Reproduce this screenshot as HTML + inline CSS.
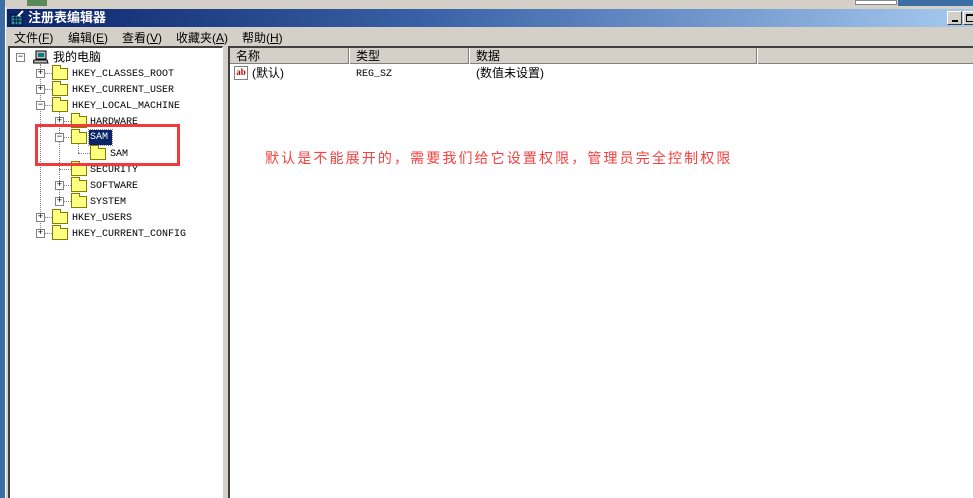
<!DOCTYPE html>
<html><head><meta charset="utf-8"><style>
*{margin:0;padding:0;box-sizing:border-box}
body{width:973px;height:498px;overflow:hidden;background:#d4d0c8;position:relative;font-family:"Liberation Sans","Noto Sans CJK SC",sans-serif;font-size:12px}
.a{position:absolute}
.t{position:absolute;font-family:"Liberation Mono","Noto Sans CJK SC",monospace;font-size:10px;line-height:12px;color:#000;white-space:nowrap}
.cn{font-family:"Liberation Sans","Noto Sans CJK SC",sans-serif;font-size:12px}
.box{position:absolute;width:9px;height:9px;border:1px solid #808080;background:#fff;font-size:9px;line-height:7px;text-align:center;color:#000;font-family:"Liberation Mono",monospace}
.f{position:absolute;width:16px;height:12px;background:#ffff80;border:1px solid #808000}
.f:before{content:"";position:absolute;left:-1px;top:-4px;width:7px;height:3px;background:#ffff80;border:1px solid #808000;border-bottom:none}
.vl{position:absolute;border-left:1px dotted #808080;width:0}
.hl{position:absolute;border-top:1px dotted #808080;height:0}
.m{position:absolute;top:29px;font-size:12px}
</style></head><body>
<div class="a" style="left:0;top:0;width:5px;height:498px;background:#3a6ea5"></div>
<div class="a" style="left:5px;top:0;width:968px;height:9px;background:#d4d0c8;border-bottom:1px solid #fff"></div>
<div class="a" style="left:27px;top:0;width:20px;height:6px;background:#5a8a5a"></div>
<div class="a" style="left:855px;top:0;width:42px;height:5px;background:#fff;border:1px solid #888"></div>
<div class="a" style="left:898px;top:0;width:75px;height:6px;background:#3a6ea5"></div>
<div class="a" style="left:5px;top:7px;width:968px;height:491px;background:#d4d0c8;border-left:1px solid #fff"></div>
<div class="a" style="left:7px;top:9px;width:966px;height:18px;background:linear-gradient(90deg,#0a246a 0%,#3c64a8 45%,#a6caf0 100%)"></div>
<svg class="a" style="left:9px;top:10px" width="16" height="16"><rect x="2" y="5" width="11" height="10" fill="#2aa0a0" stroke="#003" stroke-width="1"/><path d="M3 8h9M3 11h9M6 5v10M9 5v10" stroke="#003"/><path d="M9 6l5-5" stroke="#fff" stroke-width="2"/></svg>
<div class="a" style="left:28px;top:9px;color:#fff;font-weight:bold;font-size:13px;line-height:18px">注册表编辑器</div>
<div class="a" style="left:947px;top:11px;width:15px;height:14px;background:#d4d0c8;border:1px solid;border-color:#fff #404040 #404040 #fff"><div class="a" style="left:4px;top:8px;width:6px;height:2px;background:#000"></div></div>
<div class="a" style="left:963px;top:11px;width:12px;height:14px;background:#d4d0c8;border:1px solid;border-color:#fff #404040 #404040 #fff"><div class="a" style="left:2px;top:2px;width:9px;height:8px;border:1px solid #000;border-top-width:2px"></div></div>
<div class="m" style="left:14px">文件(<u>F</u>)</div>
<div class="m" style="left:68px">编辑(<u>E</u>)</div>
<div class="m" style="left:122px">查看(<u>V</u>)</div>
<div class="m" style="left:176px">收藏夹(<u>A</u>)</div>
<div class="m" style="left:242px">帮助(<u>H</u>)</div>
<div class="a" style="left:8px;top:46px;width:215px;height:452px;background:#fff;border-left:2px solid #404040;border-top:2px solid #404040;border-right:1px solid #fff"></div>
<div class="a" style="left:228px;top:46px;width:745px;height:452px;background:#fff;border-left:2px solid #404040;border-top:2px solid #404040"></div>
<div class="a" style="left:230px;top:48px;width:743px;height:16px;background:#d4d0c8;border-bottom:1px solid #808080"></div>
<div class="a" style="left:348px;top:48px;width:1px;height:16px;background:#808080"></div><div class="a" style="left:349px;top:48px;width:1px;height:16px;background:#fff"></div>
<div class="a" style="left:468px;top:48px;width:1px;height:16px;background:#808080"></div><div class="a" style="left:469px;top:48px;width:1px;height:16px;background:#fff"></div>
<div class="a" style="left:756px;top:48px;width:1px;height:16px;background:#808080"></div><div class="a" style="left:757px;top:48px;width:1px;height:16px;background:#fff"></div>
<div class="a cn" style="left:236px;top:49px;line-height:14px">名称</div>
<div class="a cn" style="left:356px;top:49px;line-height:14px">类型</div>
<div class="a cn" style="left:476px;top:49px;line-height:14px">数据</div>
<div class="a" style="left:234px;top:66px;width:14px;height:14px;border:1px solid #808080;background:#fff;color:#c00000;font:bold 9px 'Liberation Serif',serif;line-height:10px;text-align:center">ab</div>
<div class="a cn" style="left:252px;top:66px;line-height:14px">(默认)</div>
<div class="t" style="left:356px;top:69px">REG_SZ</div>
<div class="a cn" style="left:476px;top:66px;line-height:14px">(数值未设置)</div>
<div class="vl" style="left:40px;top:64px;height:170px"></div>
<div class="hl" style="left:40px;top:73px;width:12px"></div>
<div class="hl" style="left:40px;top:89px;width:12px"></div>
<div class="hl" style="left:40px;top:105px;width:12px"></div>
<div class="hl" style="left:40px;top:217px;width:12px"></div>
<div class="hl" style="left:40px;top:233px;width:12px"></div>
<div class="vl" style="left:59px;top:112px;height:89px"></div>
<div class="hl" style="left:59px;top:121px;width:12px"></div>
<div class="hl" style="left:59px;top:137px;width:12px"></div>
<div class="hl" style="left:59px;top:169px;width:12px"></div>
<div class="hl" style="left:59px;top:185px;width:12px"></div>
<div class="hl" style="left:59px;top:201px;width:12px"></div>
<div class="vl" style="left:78px;top:144px;height:9px"></div>
<div class="hl" style="left:78px;top:153px;width:12px"></div>
<div class="box" style="left:16px;top:53px">−</div>
<div class="box" style="left:36px;top:69px">+</div>
<div class="box" style="left:36px;top:85px">+</div>
<div class="box" style="left:36px;top:101px">−</div>
<div class="box" style="left:55px;top:117px">+</div>
<div class="box" style="left:55px;top:133px">−</div>
<div class="box" style="left:55px;top:181px">+</div>
<div class="box" style="left:55px;top:197px">+</div>
<div class="box" style="left:36px;top:213px">+</div>
<div class="box" style="left:36px;top:229px">+</div>
<svg class="a" style="left:33px;top:50px" width="16" height="15"><rect x="3" y="1" width="10" height="8" fill="#c0c0c0" stroke="#000"/><rect x="5" y="3" width="6" height="4" fill="#008080"/><path d="M1 10h13l1 3H0z" fill="#c0c0c0" stroke="#000"/></svg>
<div class="a cn" style="left:53px;top:50px;line-height:14px">我的电脑</div>
<div class="f" style="left:52px;top:68px"></div><div class="t" style="left:72px;top:69px">HKEY_CLASSES_ROOT</div>
<div class="f" style="left:52px;top:84px"></div><div class="t" style="left:72px;top:85px">HKEY_CURRENT_USER</div>
<div class="f" style="left:52px;top:100px"></div><div class="t" style="left:72px;top:101px">HKEY_LOCAL_MACHINE</div>
<div class="f" style="left:71px;top:116px"></div><div class="t" style="left:90px;top:117px">HARDWARE</div>
<div class="f" style="left:71px;top:132px"></div><div class="a" style="left:89px;top:130px;width:23px;height:15px;background:#0a246a;outline:1px dotted #888"></div><div class="t" style="left:90px;top:132px;color:#fff">SAM</div>
<div class="f" style="left:90px;top:148px"></div><div class="t" style="left:110px;top:149px">SAM</div>
<div class="f" style="left:71px;top:164px"></div><div class="t" style="left:90px;top:165px">SECURITY</div>
<div class="f" style="left:71px;top:180px"></div><div class="t" style="left:90px;top:181px">SOFTWARE</div>
<div class="f" style="left:71px;top:196px"></div><div class="t" style="left:90px;top:197px">SYSTEM</div>
<div class="f" style="left:52px;top:212px"></div><div class="t" style="left:72px;top:213px">HKEY_USERS</div>
<div class="f" style="left:52px;top:228px"></div><div class="t" style="left:72px;top:229px">HKEY_CURRENT_CONFIG</div>
<div class="a" style="left:35px;top:124px;width:145px;height:42px;border:3px solid #f23a3a"></div>
<div class="a" style="left:265px;top:149px;color:#f5403f;font-size:14px;line-height:18px;white-space:nowrap;letter-spacing:2.12px">默认是不能展开的，需要我们给它设置权限，管理员完全控制权限</div>
</body></html>
